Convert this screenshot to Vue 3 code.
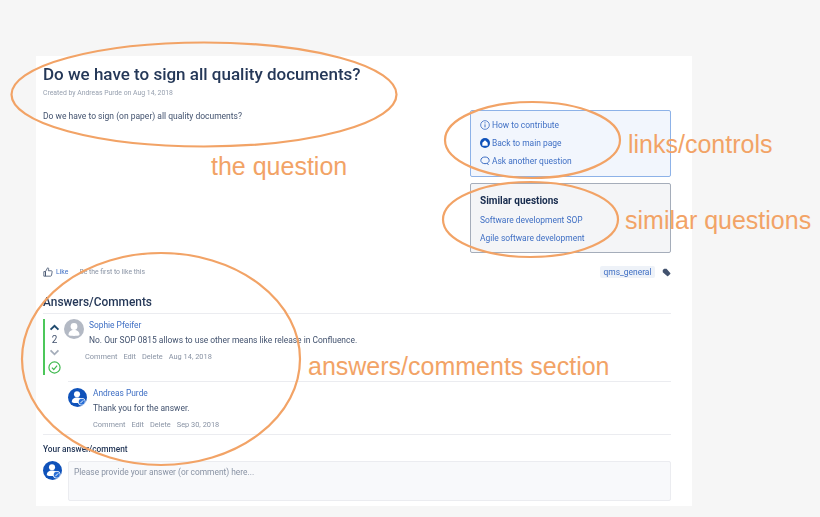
<script setup>
const comments = [
  { name: 'Sophie Pfeifer', text: 'No. Our SOP 0815 allows to use other means like release in Confluence.', date: 'Aug 14, 2018' },
  { name: 'Andreas Purde', text: 'Thank you for the answer.', date: 'Sep 30, 2018' }
]
</script>

<template>
  <div class="page">
    <main class="sheet">
      <section class="top">
        <div class="question">
          <h1>Do we have to sign all quality documents?</h1>
          <p class="meta">Created by Andreas Purde on Aug 14, 2018</p>
          <p class="body">Do we have to sign (on paper) all quality documents?</p>
        </div>
        <aside class="side">
          <div class="panel links">
            <a>
              <svg viewBox="0 0 12 12" width="10" height="10"><circle cx="6" cy="6" r="5.200" fill="none" stroke="#3f6fc4" stroke-width="1"/><path d="M6 5.200v3.600M6 2.800v1.300" stroke="#3f6fc4" stroke-width="1.200"/></svg>
              How to contribute
            </a>
            <a>
              <svg viewBox="0 0 12 12" width="10" height="10"><circle cx="6" cy="6" r="6" fill="#0f52ba"/><path d="M6 2.600 9.200 5.600V9.200H2.800V5.600Z" fill="#fff"/></svg>
              Back to main page
            </a>
            <a>
              <svg viewBox="0 0 12 12" width="10" height="10"><path d="M10.200 10.800 8.600 8.500C7.900 9 7 9.200 6 9.200 3 9.200 1 7.500 1 5.200S3 1.200 6 1.200 11 2.900 11 5.200C11 6.500 10.300 7.700 9 8.500" fill="none" stroke="#3f6fc4" stroke-width="1.200"/></svg>
              Ask another question
            </a>
          </div>
          <div class="panel similar">
            <h3>Similar questions</h3>
            <a>Software development SOP</a>
            <a>Agile software development</a>
          </div>
        </aside>
      </section>

      <div class="likes">
        <span class="like">
          <svg viewBox="0 0 12 12" width="10" height="10"><path d="M1 5.500h2V11H1ZM3 5.500 5.500 1c1 0 1.500.7 1.300 1.600L6.400 4.500H10c.7 0 1.100.6 1 1.200l-.8 4.300c-.1.600-.5 1-1.100 1H3Z" fill="none" stroke="#44546f" stroke-width="1"/></svg>
          <a>Like</a>
        </span>
        <span class="first">Be the first to like this</span>
        <span class="tag">qms_general</span>
        <svg class="tagicon" viewBox="0 0 12 12" width="9" height="9"><path d="M1 2.500 3 1h3l5 5.500c.4.400.4 1 0 1.400L8.200 10.700c-.4.400-1 .4-1.400 0L1 5.500Z" fill="#42526e"/></svg>
      </div>

      <h2>Answers/Comments</h2>

      <div class="comment accepted">
        <div class="votes">
          <svg viewBox="0 0 12 8" width="11" height="7"><path d="M1.500 6.500 6 2l4.500 4.500" fill="none" stroke="#1f4a6e" stroke-width="2.200"/></svg>
          <span>2</span>
          <svg viewBox="0 0 12 8" width="11" height="7"><path d="M1.500 1.500 6 6l4.500-4.500" fill="none" stroke="#a5adba" stroke-width="2"/></svg>
          <svg class="check" viewBox="0 0 14 14" width="13" height="13"><circle cx="7" cy="7" r="6" fill="none" stroke="#3fb94f" stroke-width="1.300"/><path d="M4.200 7.200 6.200 9.200 9.800 5" fill="none" stroke="#3fb94f" stroke-width="1.300"/></svg>
        </div>
        <svg class="avatar" viewBox="0 0 20 20" width="20" height="20"><circle cx="10" cy="10" r="10" fill="#b3b9c4"/><circle cx="10" cy="7.500" r="3.400" fill="#fff"/><path d="M4.500 16c0-3.500 2.200-5 5.500-5s5.500 1.500 5.500 5c-1.500 1.200-9.500 1.200-11 0Z" fill="#fff"/></svg>
        <div class="ctext">
          <a class="name">{{ comments[0].name }}</a>
          <p>{{ comments[0].text }}</p>
          <div class="actions"><span>Comment</span><span>Edit</span><span>Delete</span><span>{{ comments[0].date }}</span></div>
        </div>
      </div>

      <div class="comment second">
        <svg class="avatar" viewBox="0 0 20 20" width="19" height="19"><circle cx="10" cy="10" r="10" fill="#0f52ba"/><circle cx="9.500" cy="6.500" r="3.200" fill="#fff"/><path d="M4 15c0-3.500 2.200-5 5.500-5s5.500 1.500 5.500 5c-1.500 1.200-9.500 1.200-11 0Z" fill="#fff"/><circle cx="14.500" cy="14.500" r="4" fill="#fff"/><circle cx="14.500" cy="14.500" r="3.200" fill="#2a6fd6"/><path d="M13 16l3-3" stroke="#fff" stroke-width="1"/></svg>
        <div class="ctext">
          <a class="name">{{ comments[1].name }}</a>
          <p>{{ comments[1].text }}</p>
          <div class="actions"><span>Comment</span><span>Edit</span><span>Delete</span><span>{{ comments[1].date }}</span></div>
        </div>
      </div>

      <div class="reply">
        <h4>Your answer/comment</h4>
        <div class="reply-row">
          <svg class="avatar" viewBox="0 0 20 20" width="19" height="19"><circle cx="10" cy="10" r="10" fill="#0f52ba"/><circle cx="9.500" cy="6.500" r="3.200" fill="#fff"/><path d="M4 15c0-3.500 2.200-5 5.500-5s5.500 1.500 5.500 5c-1.500 1.200-9.500 1.200-11 0Z" fill="#fff"/><circle cx="14.500" cy="14.500" r="4" fill="#fff"/><circle cx="14.500" cy="14.500" r="3.200" fill="#2a6fd6"/><path d="M13 16l3-3" stroke="#fff" stroke-width="1"/></svg>
          <div class="input">Please provide your answer (or comment) here...</div>
        </div>
      </div>
    </main>

    <svg class="marks" viewBox="0 0 820 517" width="820" height="517">
      <g fill="none" stroke="#f2a366" stroke-width="2.200">
        <ellipse cx="204" cy="94.500" rx="192.500" ry="52"/>
        <ellipse cx="532.500" cy="140" rx="87.500" ry="38"/>
        <ellipse cx="530.500" cy="219.500" rx="87.500" ry="37.500"/>
        <ellipse cx="161" cy="359" rx="139" ry="106"/>
      </g>
    </svg>
    <span class="label l1">the question</span>
    <span class="label l2">links/controls</span>
    <span class="label l3">similar questions</span>
    <span class="label l4">answers/comments section</span>
  </div>
</template>

<style>
html, body { margin: 0; background: #f6f6f6; }
</style>

<style scoped>
.page {
  position: relative;
  width: 820px;
  height: 517px;
  overflow: hidden;
  padding: 56px 128px 0 36px;
  box-sizing: border-box;
  background: #f6f6f6;
  font-family: Roboto, "Noto Sans", sans-serif;
  color: #42526e;
}
.sheet {
  background: #fff;
  height: 450px;
  padding: 0 21px 0 7px;
  display: flex;
  flex-direction: column;
  filter: blur(0.35px);
}
a { color: #3f6fc4; }
.top { display: flex; justify-content: space-between; height: 198px; }
h1 {
  margin: 7px 0 0;
  font-size: 17px;
  line-height: 22px;
  font-weight: 500;
  color: #253858;
}
.meta { margin: 3px 0 0; font-size: 6.850px; line-height: 10px; color: #97a0af; }
.body { margin: 13px 0 0; font-size: 8.500px; line-height: 11px; color: #42526e; }
.side { width: 201px; padding-top: 54px; display: flex; flex-direction: column; gap: 6px; }
.panel { box-sizing: border-box; border-radius: 2px; font-size: 8.450px; display: flex; flex-direction: column; }
.links { height: 67px; background: #f2f6fd; border: 1px solid #8db2e8; padding: 9px 9px 0; gap: 8px; }
.links a { display: flex; align-items: center; gap: 2px; line-height: 10px; }
.similar { height: 70px; background: #f4f5f7; border: 1px solid #a5adba; padding: 11px 9px 0; }
.similar h3 { margin: 0 0 8px; font-size: 10px; line-height: 12px; font-weight: 700; color: #172b4d; }
.similar a { line-height: 10px; margin-bottom: 8px; }
.likes { display: flex; align-items: center; height: 14px; margin-top: 11px; font-size: 6.850px; }
.like { display: flex; align-items: center; gap: 3px; }
.first { margin-left: 11px; color: #8993a4; }
.tag { margin-left: auto; background: #eef2f8; color: #3f6fc4; font-size: 8.450px; line-height: 12px; padding: 0 3.500px; border-radius: 2px; }
.tagicon { margin-left: 7px; }
h2 { margin: 15px 0 0; font-size: 11.900px; line-height: 16px; font-weight: 500; color: #253858; }
.comment { display: flex; position: relative; }
.accepted { margin-top: 3px; border-top: 1px solid #ebecf0; padding-top: 5px; height: 62px; box-sizing: content-box; }
.votes {
  width: 21px;
  height: 56px;
  border-left: 2px solid #4cc75a;
  display: flex;
  flex-direction: column;
  align-items: center;
  box-sizing: border-box;
  font-size: 10px;
  line-height: 12px;
  flex: none;
  padding-top: 5px;
  gap: 3px;
}
.check { margin-top: 2px; }
.avatar { flex: none; }
.ctext { margin-left: 6px; }
.accepted .ctext { margin-left: 5px; padding-top: 1px; }
.name { display: block; font-size: 8.400px; line-height: 10px; }
.ctext p { margin: 5px 0 0; font-size: 8.450px; line-height: 11px; color: #42526e; }
.actions { display: flex; gap: 6px; margin-top: 6px; margin-left: -4px; font-size: 7.400px; line-height: 10px; color: #8993a4; }
.second { margin-left: 25px; border-top: 1px solid #ebecf0; padding-top: 6px; height: 46px; }
.second .actions { margin-left: 0; }
.reply { border-top: 1px solid #ebecf0; padding-top: 9px; }
h4 { margin: 0; font-size: 8.300px; line-height: 10px; font-weight: 500; color: #253858; }
.reply-row { display: flex; gap: 6px; margin-top: 7px; }
.input {
  flex: 1;
  height: 40px;
  box-sizing: border-box;
  background: #f8f9fb;
  border: 1px solid #ebecf0;
  border-radius: 2px;
  padding: 5px;
  font-size: 8.400px;
  line-height: 11px;
  color: #8993a4;
}
.marks { position: absolute; left: 0; top: 0; pointer-events: none; }
.label { position: absolute; font-family: "Liberation Sans", Arial, sans-serif; color: #f2a366; font-size: 25px; line-height: 30px; white-space: nowrap; }
.l1 { left: 211px; top: 151px; }
.l2 { left: 628px; top: 129px; }
.l3 { left: 625px; top: 205px; }
.l4 { left: 308px; top: 351px; }
</style>
